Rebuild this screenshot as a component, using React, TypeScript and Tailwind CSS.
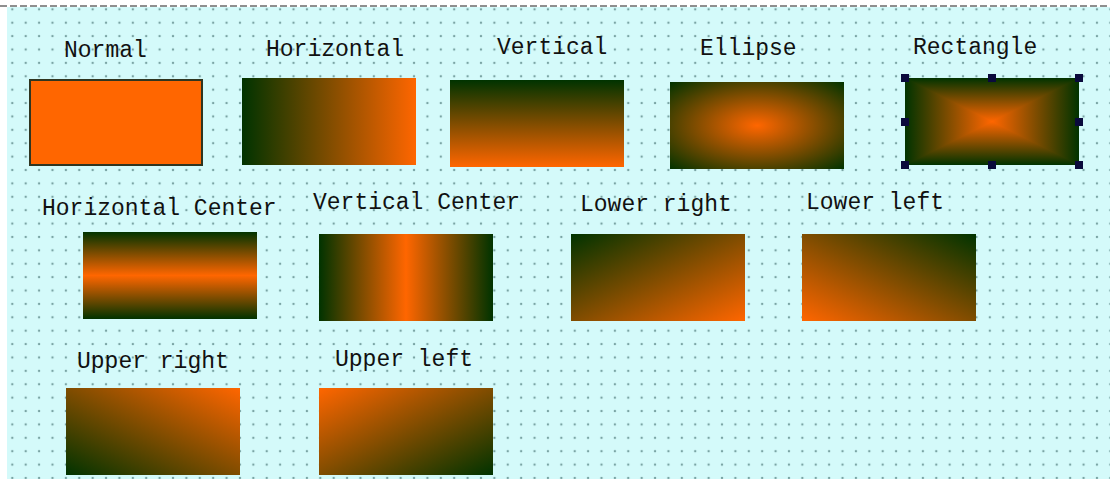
import React from "react";

type Item = {
  label: string;
  itemCls: string;
  labelCls: string;
  boxCls: string;
  kind?: "rect";
};

const labelBase =
  "h-[24px] leading-[24px] whitespace-nowrap text-[23px] text-[#111] font-['Liberation_Mono','DejaVu_Sans_Mono',monospace]";

function RectGradient() {
  const d = "#003300";
  const o = "#ff6600";
  return (
    <svg width="174" height="87" viewBox="0 0 174 87" preserveAspectRatio="none" className="block">
      <defs>
        <linearGradient id="gh" gradientUnits="userSpaceOnUse" x1="0" y1="0" x2="174" y2="0">
          <stop offset="0" stopColor={d} />
          <stop offset="0.5" stopColor={o} />
          <stop offset="1" stopColor={d} />
        </linearGradient>
        <linearGradient id="gv" gradientUnits="userSpaceOnUse" x1="0" y1="0" x2="0" y2="87">
          <stop offset="0" stopColor={d} />
          <stop offset="0.5" stopColor={o} />
          <stop offset="1" stopColor={d} />
        </linearGradient>
      </defs>
      <rect x="0" y="0" width="174" height="87" fill="url(#gh)" />
      <polygon points="0,0 174,0 87,43.5" fill="url(#gv)" />
      <polygon points="0,87 174,87 87,43.5" fill="url(#gv)" />
    </svg>
  );
}

function Handle({ cls }: { cls: string }) {
  return <div className={"absolute w-[8px] h-[8px] bg-[#0a0a3c] " + cls} />;
}

function Shape({ it }: { it: Item }) {
  return (
    <div className={"flex flex-col w-[174px] shrink-0 " + it.itemCls}>
      <div className={labelBase + " " + it.labelCls}>{it.label}</div>
      {it.kind === "rect" ? (
        <div className={"relative w-[174px] h-[87px] " + it.boxCls}>
          <RectGradient />
          <Handle cls="-left-[4px] -top-[4px]" />
          <Handle cls="left-[83px] -top-[4px]" />
          <Handle cls="-right-[4px] -top-[4px]" />
          <Handle cls="-left-[4px] top-[40px]" />
          <Handle cls="-right-[4px] top-[40px]" />
          <Handle cls="-left-[4px] -bottom-[4px]" />
          <Handle cls="left-[83px] -bottom-[4px]" />
          <Handle cls="-right-[4px] -bottom-[4px]" />
        </div>
      ) : (
        <div className={"w-[174px] h-[87px] " + it.boxCls} />
      )}
    </div>
  );
}

const row1: Item[] = [
  {
    label: "Normal",
    itemCls: "ml-[22px] mt-[32px]",
    labelCls: "ml-[35px]",
    boxCls: "mt-[16px] bg-[#ff6600] border-2 border-[#2f3520]",
  },
  {
    label: "Horizontal",
    itemCls: "ml-[39px] mt-[31px]",
    labelCls: "ml-[24px]",
    boxCls: "mt-[16px] bg-[image:linear-gradient(to_right,#003300,#ff6600)]",
  },
  {
    label: "Vertical",
    itemCls: "ml-[34px] mt-[29px]",
    labelCls: "ml-[47px]",
    boxCls: "mt-[20px] bg-[image:linear-gradient(to_bottom,#003300,#ff6600)]",
  },
  {
    label: "Ellipse",
    itemCls: "ml-[46px] mt-[30px]",
    labelCls: "ml-[30px]",
    boxCls: "mt-[21px] bg-[image:radial-gradient(ellipse_at_center,#ff6600,#003300)]",
  },
  {
    label: "Rectangle",
    itemCls: "ml-[61px] mt-[29px]",
    labelCls: "ml-[8px]",
    boxCls: "mt-[18px]",
    kind: "rect",
  },
];

const row2: Item[] = [
  {
    label: "Horizontal Center",
    itemCls: "ml-[76px] mt-[30px]",
    labelCls: "ml-[-41px]",
    boxCls: "mt-[11px] bg-[image:linear-gradient(to_bottom,#003300,#ff6600_50%,#003300)]",
  },
  {
    label: "Vertical Center",
    itemCls: "ml-[62px] mt-[24px]",
    labelCls: "ml-[-6px]",
    boxCls: "mt-[19px] bg-[image:linear-gradient(to_right,#003300,#ff6600_50%,#003300)]",
  },
  {
    label: "Lower right",
    itemCls: "ml-[78px] mt-[26px]",
    labelCls: "ml-[9px]",
    boxCls: "mt-[17px] bg-[image:linear-gradient(to_bottom_right,#003300,#ff6600)]",
  },
  {
    label: "Lower left",
    itemCls: "ml-[57px] mt-[24px]",
    labelCls: "ml-[4px]",
    boxCls: "mt-[19px] bg-[image:linear-gradient(to_bottom_left,#003300,#ff6600)]",
  },
];

const row3: Item[] = [
  {
    label: "Upper right",
    itemCls: "ml-[59px] mt-[23px]",
    labelCls: "ml-[11px]",
    boxCls: "mt-[14px] bg-[image:linear-gradient(to_top_right,#003300,#ff6600)]",
  },
  {
    label: "Upper left",
    itemCls: "ml-[79px] mt-[21px]",
    labelCls: "ml-[16px]",
    boxCls: "mt-[16px] bg-[image:linear-gradient(to_top_left,#003300,#ff6600)]",
  },
];

export default function App() {
  return (
    <div className="w-[1110px] h-[479px] bg-white overflow-hidden">
      <div className="h-[5px]" />
      <div className="h-[2px] bg-[image:repeating-linear-gradient(to_right,#8f8f8f_0px,#8f8f8f_7px,transparent_7px,transparent_10px)]" />
      <div className="ml-[7px] h-[472px] flex flex-col bg-[#d4fafa] bg-[image:radial-gradient(circle,#7aa4a4_0px,#7aa4a4_0.8px,transparent_1.6px)] bg-[length:13.4px_13.4px] bg-[position:-1.4px_-4.4px]">
        <div className="flex items-start h-[160px] shrink-0">
          {row1.map((it) => (
            <Shape key={it.label} it={it} />
          ))}
        </div>
        <div className="flex items-start h-[160px] shrink-0">
          {row2.map((it) => (
            <Shape key={it.label} it={it} />
          ))}
        </div>
        <div className="flex items-start flex-1">
          {row3.map((it) => (
            <Shape key={it.label} it={it} />
          ))}
        </div>
      </div>
    </div>
  );
}
